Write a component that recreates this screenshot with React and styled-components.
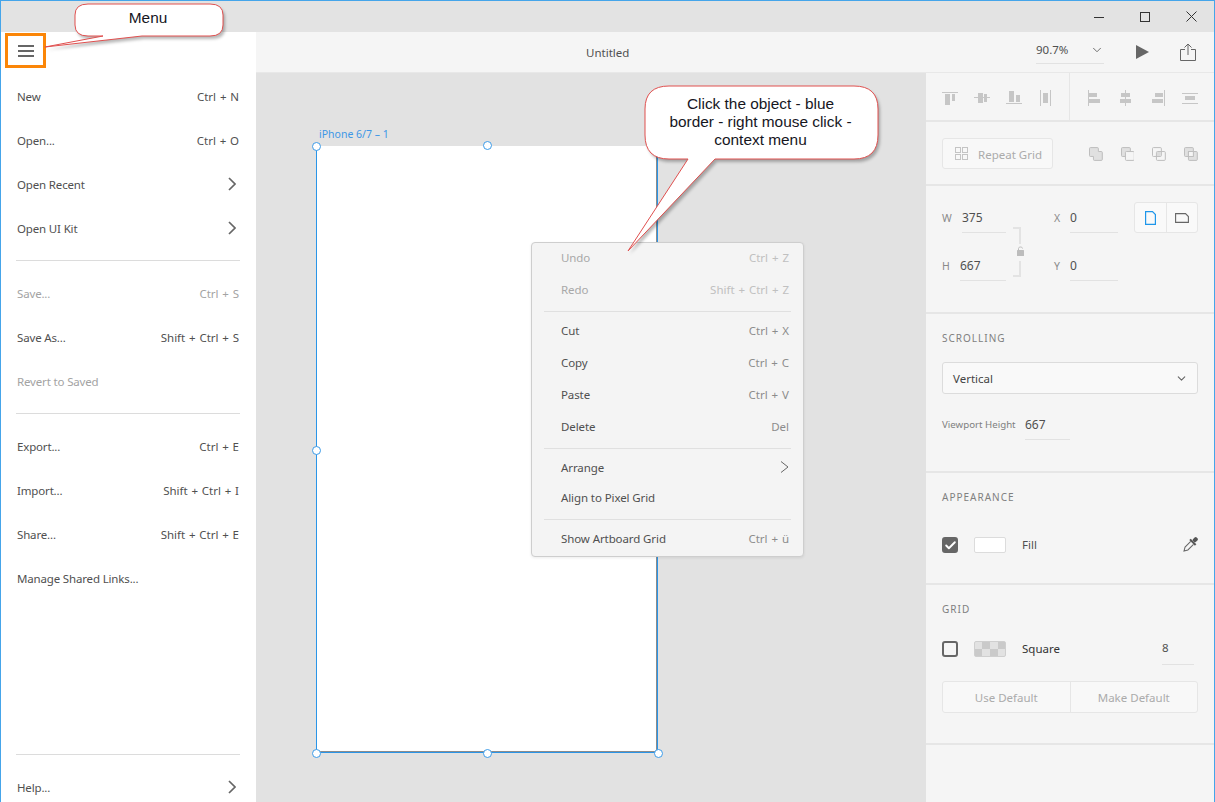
import styled, { createGlobalStyle } from "styled-components";
import { ChevronDown, Check } from "lucide-react";

const Global = createGlobalStyle`
  html, body { margin: 0; padding: 0; background: #fff; overflow: hidden; }
  * { box-sizing: border-box; }
  body { font-family: "Noto Sans", "Open Sans", sans-serif; font-size: 11.5px; color: #505050; }
`;

const Window = styled.div`
  position: relative;
  width: 1215px;
  height: 802px;
  display: flex;
  flex-direction: column;
  border: 1px solid #45a5ea;
  border-bottom: 0;
  overflow: hidden;
`;

const TitleBar = styled.div`
  height: 31px;
  flex: none;
  background: #e3e3e3;
  display: flex;
  justify-content: flex-end;
  align-items: center;
`;

const WinButton = styled.div`
  width: 46px;
  height: 31px;
  display: flex;
  align-items: center;
  justify-content: center;
`;

const Body = styled.div`
  flex: 1;
  display: flex;
  min-height: 0;
`;

const Sidebar = styled.div`
  width: 255px;
  flex: none;
  background: #fff;
  display: flex;
  flex-direction: column;
`;

const SidebarHead = styled.div`
  height: 43px;
  flex: none;
  padding: 1px 0 0 4px;
`;

const Burger = styled.div`
  width: 41px;
  height: 35px;
  border: 3px solid #fb8608;
  display: flex;
  flex-direction: column;
  justify-content: center;
  align-items: center;
  gap: 3px;
  span {
    display: block;
    width: 16px;
    height: 2px;
    background: #666;
  }
`;

const MenuRow = styled.div`
  height: 44px;
  flex: none;
  padding: 0 16px 2px;
  display: flex;
  align-items: center;
  justify-content: space-between;
  color: ${(p) => (p.$off ? "#a3a3a3" : "#505050")};
`;

const MenuLabel = styled.span`
  letter-spacing: -0.16px;
`;

const MenuKeys = styled.span`
  word-spacing: 0.8px;
  margin-right: 1px;
`;

const SideChevron = styled.svg`
  width: 8px;
  height: 14px;
  margin: 0 4px 0 0;
`;

const SideRule = styled.div`
  height: 1px;
  flex: none;
  margin: ${(p) => p.$top || 9}px 16px 11px 15px;
  background: #dcdcdc;
`;

const Main = styled.div`
  flex: 1;
  min-width: 0;
  display: flex;
  flex-direction: column;
`;

const Toolbar = styled.div`
  height: 40px;
  flex: none;
  background: #f5f5f5;
  display: flex;
  align-items: center;
  padding: 0 18px 0 330px;
  justify-content: space-between;
`;

const DocTitle = styled.div`
  width: 0;
  white-space: nowrap;
`;

const ToolGroup = styled.div`
  display: flex;
  align-items: center;
`;

const Zoom = styled.div`
  width: 68px;
  height: 26px;
  margin: -2px 32px 0 0;
  border-bottom: 1px solid #e2e2e2;
  display: flex;
  align-items: center;
  justify-content: space-between;
  padding: 0 0 2px;
`;

const PlayIcon = styled.svg`
  width: 13px;
  height: 14px;
  margin: -1px 31px 0 0;
`;

const Work = styled.div`
  flex: 1;
  min-height: 0;
  display: flex;
  border-top: 1px solid #e8e8e8;
`;

const Canvas = styled.div`
  position: relative;
  flex: 1;
  background: #e2e2e2;
`;

const ArtLabel = styled.div`
  position: absolute;
  left: 63px;
  top: 54px;
  color: #3d97e6;
  font-size: 10.5px;
`;

const Artboard = styled.div`
  position: absolute;
  left: 60px;
  top: 73px;
  width: 341px;
  height: 606px;
  background: #fff;
  border-left: 1px solid #2a95e8;
  border-right: 1px solid #8c8c8c;
  border-bottom: 1px solid #8c8c8c;
  box-shadow: 1px 1px 0 #2a95e8;
`;

const Handle = styled.div`
  position: absolute;
  left: ${(p) => p.$x}px;
  top: ${(p) => p.$y}px;
  width: 9px;
  height: 9px;
  border-radius: 50%;
  background: #fff;
  border: 1px solid #3c9be8;
`;

const ContextMenu = styled.div`
  position: absolute;
  left: 275px;
  top: 169px;
  width: 273px;
  height: 315px;
  background: #f4f4f4;
  border: 1px solid #cecece;
  border-radius: 4px;
  box-shadow: 0 1px 3px rgba(0, 0, 0, 0.08);
`;

const CtxRow = styled.div`
  height: ${(p) => p.$h || 32}px;
  padding: 0 14px 2px 29px;
  display: flex;
  align-items: center;
  justify-content: space-between;
  letter-spacing: -0.1px;
  color: ${(p) => (p.$off ? "#a8a8a8" : "#505050")};
  &:first-child { margin-top: -1px; }
`;

const Shortcut = styled.span`
  word-spacing: 0.9px;
  letter-spacing: 0;
  color: ${(p) => (p.$off ? "#c0c0c0" : "#8c8c8c")};
`;

const CtxRule = styled.div`
  height: 1px;
  margin: ${(p) => p.$top}px 12px ${(p) => p.$bottom}px;
  background: #e0e0e0;
`;

const Panel = styled.div`
  width: 288px;
  flex: none;
  background: #f5f5f5;
  display: flex;
  flex-direction: column;
`;

const Section = styled.div`
  height: ${(p) => p.$h}px;
  flex: none;
  padding: ${(p) => p.$pad || "0 16px"};
  border-bottom: 2px solid #e6e6e6;
`;

const AlignRow = styled.div`
  height: 49px;
  flex: none;
  display: flex;
  border-bottom: 2px solid #e6e6e6;
`;

const AlignGroup = styled.div`
  width: ${(p) => p.$w}px;
  display: flex;
  align-items: flex-start;
  padding: 17px 0 0 16px;
  gap: 16px;
  border-right: ${(p) => (p.$rule ? "1px solid #e6e6e6" : "0")};
`;

const RepeatRow = styled.div`
  display: flex;
  align-items: center;
  height: 31px;
  gap: 18px;
`;

const RepeatButton = styled.div`
  width: 112px;
  height: 31px;
  margin-right: 18px;
  border: 1px solid #e6e6e6;
  border-radius: 3px;
  background: #f8f8f8;
  display: flex;
  align-items: center;
  gap: 10px;
  padding-left: 12px;
  color: #ababab;
  span { padding-top: 1px; }
  svg { flex: none; }
`;

const SizeWrap = styled.div`
  display: flex;
`;

const FieldColumn = styled.div`
  width: ${(p) => p.$w}px;
  display: flex;
  flex-direction: column;
  gap: 18px;
`;

const Field = styled.div`
  display: flex;
  height: 30px;
  align-items: center;
  justify-content: space-between;
`;

const FieldLabel = styled.span`
  color: #8a8a8a;
  font-size: 10.5px;
`;

const FieldValue = styled.div`
  width: ${(p) => p.$w}px;
  height: 30px;
  line-height: 30px;
  border-bottom: 1px solid #e2e2e2;
  color: #505050;
  font-size: 12px;
`;

const LockColumn = styled.div`
  width: 48px;
  padding: 24px 0 0 7px;
`;

const Toggle = styled.div`
  margin: -1px 0 0 16px;
  width: 64px;
  height: 31px;
  border: 1px solid #e6e6e6;
  border-radius: 3px;
  background: #f9f9f9;
  display: flex;
`;

const ToggleCell = styled.div`
  flex: 1;
  display: flex;
  align-items: center;
  justify-content: center;
  border-left: ${(p) => (p.$rule ? "1px solid #e6e6e6" : "0")};
`;

const Heading = styled.div`
  font-size: 10px;
  letter-spacing: 1px;
  color: #808080;
  line-height: 14px;
`;

const Select = styled.div`
  height: 32px;
  margin-top: 17px;
  background: #f9f9f9;
  border: 1px solid #dcdcdc;
  border-radius: 3px;
  display: flex;
  align-items: center;
  justify-content: space-between;
  padding: 0 9px 0 10px;
  color: #444;
`;

const ViewportRow = styled.div`
  display: flex;
  align-items: flex-start;
  margin-top: 16px;
`;

const ViewportLabel = styled.span`
  width: 83px;
  font-size: 9.7px;
  color: #808080;
  line-height: 30px;
`;

const FillRow = styled.div`
  display: flex;
  align-items: center;
  height: 16px;
  margin-top: ${(p) => p.$top}px;
  svg { flex: none; }
`;

const CheckBox = styled.div`
  width: 16px;
  height: 16px;
  border-radius: 3px;
  border: 2px solid #666;
  background: ${(p) => (p.$on ? "#666" : "transparent")};
  color: #fff;
  display: flex;
  align-items: center;
  justify-content: center;
  margin-right: 16px;
`;

const Swatch = styled.div`
  width: 32px;
  height: 16px;
  border-radius: 2px;
  border: 1px solid #dcdcdc;
  background: #fff;
  margin-right: 16px;
`;

const CheckerSwatch = styled(Swatch)`
  border: 1px solid #cfcfcf;
  background: repeating-conic-gradient(#cacaca 0 25%, #e2e2e2 0 50%) -1px -1px / 16px 16px;
`;

const RowLabel = styled.span`
  flex: 1;
  padding-bottom: 2px;
  color: ${(p) => p.$c || "#505050"};
`;

const SmallValue = styled.div`
  width: 32px;
  height: 31px;
  margin: -7px 4px 0 0;
  padding-top: 6px;
  border-bottom: 1px solid #e2e2e2;
  align-self: flex-start;
`;

const TwoButtons = styled.div`
  display: flex;
  height: 32px;
  margin-top: 24px;
  border: 1px solid #e6e6e6;
  border-radius: 3px;
  background: #f8f8f8;
`;

const TwoButton = styled.div`
  flex: 1;
  display: flex;
  align-items: center;
  justify-content: center;
  color: #ababab;
  border-left: ${(p) => (p.$rule ? "1px solid #e6e6e6" : "0")};
`;

const Rest = styled.div`
  flex: 1;
`;

const CalloutBox = styled.div`
  position: absolute;
  left: ${(p) => p.$x}px;
  top: ${(p) => p.$y}px;
  z-index: 5;
  svg { display: block; overflow: visible; }
`;

const CalloutText = styled.div`
  position: absolute;
  left: ${(p) => p.$x}px;
  top: ${(p) => p.$y}px;
  width: ${(p) => p.$w}px;
  text-align: center;
  font-family: "Liberation Sans", Arial, sans-serif;
  font-size: 15.4px;
  line-height: 18px;
  white-space: nowrap;
  color: #16161e;
`;

const Glyph = ({ children }) => (
  <svg width="16" height="16" viewBox="0 0 16 16" fill="#c6c6c6">{children}</svg>
);

const alignIcons = [
  <><rect x="0" y="2" width="16" height="1" /><rect x="3" y="4" width="5" height="11" /><rect x="10" y="4" width="3" height="7" /></>,
  <><rect x="0" y="7" width="16" height="1" /><rect x="4" y="3" width="5" height="10" /><rect x="10" y="4" width="3" height="8" /></>,
  <><rect x="0" y="13" width="16" height="1" /><rect x="3" y="1" width="5" height="11" /><rect x="10" y="5" width="4" height="7" /></>,
  <><rect x="2" y="0" width="1" height="16" /><rect x="12" y="0" width="1" height="16" /><rect x="5" y="3" width="5" height="10" /></>,
];

const distributeIcons = [
  <><rect x="2" y="0" width="1" height="16" /><rect x="3" y="3" width="8" height="4" /><rect x="3" y="9" width="11" height="4" /></>,
  <><rect x="7" y="0" width="1" height="16" /><rect x="3" y="3" width="9" height="4" /><rect x="2" y="9" width="11" height="4" /></>,
  <><rect x="14" y="0" width="1" height="16" /><rect x="5" y="3" width="8" height="4" /><rect x="2" y="9" width="11" height="4" /></>,
  <><rect x="0" y="3" width="16" height="1" /><rect x="0" y="13" width="16" height="1" /><rect x="3" y="6" width="10" height="4" /></>,
];

const BoolFrame = ({ children }) => (
  <svg width="14" height="14" viewBox="0 0 14 14" stroke="#bdbdbd">{children}</svg>
);

const boolIcons = [
  <path d="M1.500 .5H8.500Q9.500 .5 9.500 1.500V4.500H12.500Q13.500 4.500 13.500 5.500V12.500Q13.500 13.500 12.500 13.500H5.500Q4.500 13.500 4.500 12.500V9.500H1.500Q.5 9.500 .5 8.500V1.500Q.5 .5 1.500 .5Z" fill="#e0e0e0" />,
  <><rect x=".5" y=".5" width="9" height="9" rx="1" fill="#e0e0e0" /><rect x="4.500" y="4.500" width="9" height="9" rx="1" fill="#f5f5f5" /></>,
  <><rect x=".5" y=".5" width="9" height="9" rx="1" fill="none" /><rect x="4.500" y="4.500" width="9" height="9" rx="1" fill="none" /><rect x="5" y="5" width="4" height="4" fill="#dcdcdc" stroke="none" /></>,
  <><rect x=".5" y=".5" width="9" height="9" rx="1" fill="#e0e0e0" /><rect x="4.500" y="4.500" width="9" height="9" rx="1" fill="#e0e0e0" /><rect x="4.500" y="4.500" width="5" height="5" fill="#f5f5f5" /></>,
];

const Chevron = () => (
  <SideChevron viewBox="0 0 8 14" fill="none" stroke="#666" strokeWidth="1.7">
    <path d="M1 1L7 7L1 13" />
  </SideChevron>
);

const handles = [
  [56, 69], [227, 68], [56, 373], [227, 676], [56, 676], [398, 676],
];

const Callout = ({ x, y, w, h, d, children }) => (
  <CalloutBox $x={x} $y={y}>
    <svg width={w} height={h} viewBox={`0 0 ${w} ${h}`}>
      <path d={d} fill="rgba(0,0,0,0.28)" transform="translate(2 3)" style={{ filter: "blur(1.5px)" }} />
      <path d={d} fill="#fff" stroke="#e0504f" strokeWidth="1" />
    </svg>
    {children}
  </CalloutBox>
);

const App = () => (
  <>
    <Global />
    <Window>
      <TitleBar>
        <WinButton>
          <svg width="10" height="10" viewBox="0 0 10 10" stroke="#333"><path d="M0 5.500H10" /></svg>
        </WinButton>
        <WinButton>
          <svg width="10" height="10" viewBox="0 0 10 10" fill="none" stroke="#333"><rect x=".5" y=".5" width="9" height="9" /></svg>
        </WinButton>
        <WinButton>
          <svg width="11" height="11" viewBox="0 0 11 11" stroke="#333"><path d="M.5 .5L10.500 10.500M10.500 .5L.5 10.500" /></svg>
        </WinButton>
      </TitleBar>
      <Body>
        <Sidebar>
          <SidebarHead>
            <Burger><span /><span /><span /></Burger>
          </SidebarHead>
          <MenuRow><MenuLabel>New</MenuLabel><MenuKeys>Ctrl + N</MenuKeys></MenuRow>
          <MenuRow><MenuLabel>Open...</MenuLabel><MenuKeys>Ctrl + O</MenuKeys></MenuRow>
          <MenuRow><MenuLabel>Open Recent</MenuLabel><Chevron /></MenuRow>
          <MenuRow><MenuLabel>Open UI Kit</MenuLabel><Chevron /></MenuRow>
          <SideRule />
          <MenuRow $off><MenuLabel>Save...</MenuLabel><MenuKeys>Ctrl + S</MenuKeys></MenuRow>
          <MenuRow><MenuLabel>Save As...</MenuLabel><MenuKeys>Shift + Ctrl + S</MenuKeys></MenuRow>
          <MenuRow $off><MenuLabel>Revert to Saved</MenuLabel></MenuRow>
          <SideRule />
          <MenuRow><MenuLabel>Export...</MenuLabel><MenuKeys>Ctrl + E</MenuKeys></MenuRow>
          <MenuRow><MenuLabel>Import...</MenuLabel><MenuKeys>Shift + Ctrl + I</MenuKeys></MenuRow>
          <MenuRow><MenuLabel>Share...</MenuLabel><MenuKeys>Shift + Ctrl + E</MenuKeys></MenuRow>
          <MenuRow><MenuLabel>Manage Shared Links...</MenuLabel></MenuRow>
          <SideRule $top={153} />
          <MenuRow><MenuLabel>Help...</MenuLabel><Chevron /></MenuRow>
        </Sidebar>
        <Main>
          <Toolbar>
            <DocTitle>Untitled</DocTitle>
            <ToolGroup>
              <Zoom><span>90.7%</span><ChevronDown size={14} strokeWidth={1.6} color="#666" /></Zoom>
              <PlayIcon viewBox="0 0 13 14" fill="#666"><path d="M0 0L13 7L0 14Z" /></PlayIcon>
              <svg width="16" height="18" viewBox="0 0 16 18" fill="none" stroke="#666" strokeWidth="1">
                <path d="M5 6.500H.5V17.500H15.500V6.500H11" />
                <path d="M8 12V1M4.500 4.500L8 1L11.500 4.500" />
              </svg>
            </ToolGroup>
          </Toolbar>
          <Work>
            <Canvas>
              <ArtLabel>iPhone 6/7 – 1</ArtLabel>
              <Artboard />
              {handles.map(([x, y]) => <Handle key={`${x}-${y}`} $x={x} $y={y} />)}
              <ContextMenu>
                <CtxRow $off><span>Undo</span><Shortcut $off>Ctrl + Z</Shortcut></CtxRow>
                <CtxRow $off><span>Redo</span><Shortcut $off>Shift + Ctrl + Z</Shortcut></CtxRow>
                <CtxRule $top={5} $bottom={3} />
                <CtxRow><span>Cut</span><Shortcut>Ctrl + X</Shortcut></CtxRow>
                <CtxRow><span>Copy</span><Shortcut>Ctrl + C</Shortcut></CtxRow>
                <CtxRow><span>Paste</span><Shortcut>Ctrl + V</Shortcut></CtxRow>
                <CtxRow><span>Delete</span><Shortcut>Del</Shortcut></CtxRow>
                <CtxRule $top={5} $bottom={4} />
                <CtxRow $h={30}>
                  <span>Arrange</span>
                  <svg width="9" height="12" viewBox="0 0 9 12" fill="none" stroke="#666"><path d="M1 .5L8 6L1 11.500" /></svg>
                </CtxRow>
                <CtxRow $h={30}><span>Align to Pixel Grid</span></CtxRow>
                <CtxRule $top={6} $bottom={3} />
                <CtxRow><span>Show Artboard Grid</span><Shortcut>Ctrl + ü</Shortcut></CtxRow>
              </ContextMenu>
            </Canvas>
            <Panel>
              <AlignRow>
                <AlignGroup $w={144} $rule>
                  {alignIcons.map((icon, i) => <Glyph key={i}>{icon}</Glyph>)}
                </AlignGroup>
                <AlignGroup $w={144}>
                  {distributeIcons.map((icon, i) => <Glyph key={i}>{icon}</Glyph>)}
                </AlignGroup>
              </AlignRow>
              <Section $h={64} $pad="16px 16px 0">
                <RepeatRow>
                  <RepeatButton>
                    <svg width="13" height="13" viewBox="0 0 13 13" fill="none" stroke="#c4c4c4">
                      <rect x=".5" y=".5" width="5" height="5" />
                      <rect x="7.500" y=".5" width="5" height="5" />
                      <rect x=".5" y="7.500" width="5" height="5" />
                      <rect x="7.500" y="7.500" width="5" height="5" />
                    </svg>
                    <span>Repeat Grid</span>
                  </RepeatButton>
                  {boolIcons.map((icon, i) => <BoolFrame key={i}>{icon}</BoolFrame>)}
                </RepeatRow>
              </Section>
              <Section $h={128} $pad="17px 16px 0">
                <SizeWrap>
                  <FieldColumn $w={64}>
                    <Field><FieldLabel>W</FieldLabel><FieldValue $w={44}>375</FieldValue></Field>
                    <Field><FieldLabel>H</FieldLabel><FieldValue $w={46}>667</FieldValue></Field>
                  </FieldColumn>
                  <LockColumn>
                    <svg width="12" height="50" viewBox="0 0 12 50" fill="none">
                      <path d="M0 1H7V17M7 34V49H0" stroke="#e3e3e3" strokeWidth="2" />
                      <rect x="4" y="23" width="7" height="6" rx=".5" fill="#bcbcbc" />
                      <path d="M5.500 23V21.500C5.500 19.500 9.500 19.500 9.500 21.500" stroke="#bcbcbc" />
                    </svg>
                  </LockColumn>
                  <FieldColumn $w={64}>
                    <Field><FieldLabel>X</FieldLabel><FieldValue $w={48}>0</FieldValue></Field>
                    <Field><FieldLabel>Y</FieldLabel><FieldValue $w={48}>0</FieldValue></Field>
                  </FieldColumn>
                  <Toggle>
                    <ToggleCell>
                      <svg width="11" height="14" viewBox="0 0 11 14" fill="none" stroke="#1e96ea" strokeWidth="1.2">
                        <path d="M.6 .6H7.500L10.400 3.500V13.400H.6Z" />
                      </svg>
                    </ToggleCell>
                    <ToggleCell $rule>
                      <svg width="14" height="10" viewBox="0 0 14 10" fill="none" stroke="#666" strokeWidth="1.1">
                        <path d="M.6 .6H10.500L13.400 3.500V9.400H.6Z" />
                      </svg>
                    </ToggleCell>
                  </Toggle>
                </SizeWrap>
              </Section>
              <Section $h={159} $pad="17px 16px 0">
                <Heading>SCROLLING</Heading>
                <Select>Vertical<ChevronDown size={13} strokeWidth={2} color="#666" /></Select>
                <ViewportRow>
                  <ViewportLabel>Viewport Height</ViewportLabel>
                  <FieldValue $w={45}>667</FieldValue>
                </ViewportRow>
              </Section>
              <Section $h={112} $pad="17px 16px 0">
                <Heading>APPEARANCE</Heading>
                <FillRow $top={33}>
                  <CheckBox $on><Check size={13} strokeWidth={3.5} /></CheckBox>
                  <Swatch />
                  <RowLabel>Fill</RowLabel>
                  <svg width="16" height="16" viewBox="0 0 16 16" fill="none" stroke="#666" style={{ marginRight: 0 }}>
                    <g transform="rotate(45 8 8)">
                      <rect x="6" y="-2" width="4" height="5" rx="1.500" fill="#555" stroke="none" />
                      <rect x="4" y="3" width="8" height="2" fill="#555" stroke="none" />
                      <path d="M6 5V13L8 16.500L10 13V5" />
                    </g>
                  </svg>
                </FillRow>
              </Section>
              <Section $h={160} $pad="17px 16px 0">
                <Heading>GRID</Heading>
                <FillRow $top={25}>
                  <CheckBox />
                  <CheckerSwatch />
                  <RowLabel $c="#333">Square</RowLabel>
                  <SmallValue>8</SmallValue>
                </FillRow>
                <TwoButtons>
                  <TwoButton>Use Default</TwoButton>
                  <TwoButton $rule>Make Default</TwoButton>
                </TwoButtons>
              </Section>
              <Rest />
            </Panel>
          </Work>
        </Main>
      </Body>
      <Callout x={74} y={2} w={150} h={46} d="M13 1H135Q148 1 148 12V22Q148 33 135 33H67L-30 44L28 33H13Q0 33 0 22V12Q0 1 13 1Z">
        <CalloutText $x={-1} $y={6} $w={148}>Menu</CalloutText>
      </Callout>
      <Callout x={644} y={84} w={234} h={170} d="M24 1H209Q233 1 233 24V50Q233 74 209 74H70L-17 166L43 74H24Q0 74 0 50V24Q0 1 24 1Z">
        <CalloutText $x={-1} $y={10} $w={233}>Click the object - blue<br />border - right mouse click -<br />context menu</CalloutText>
      </Callout>
    </Window>
  </>
);

export default App;
